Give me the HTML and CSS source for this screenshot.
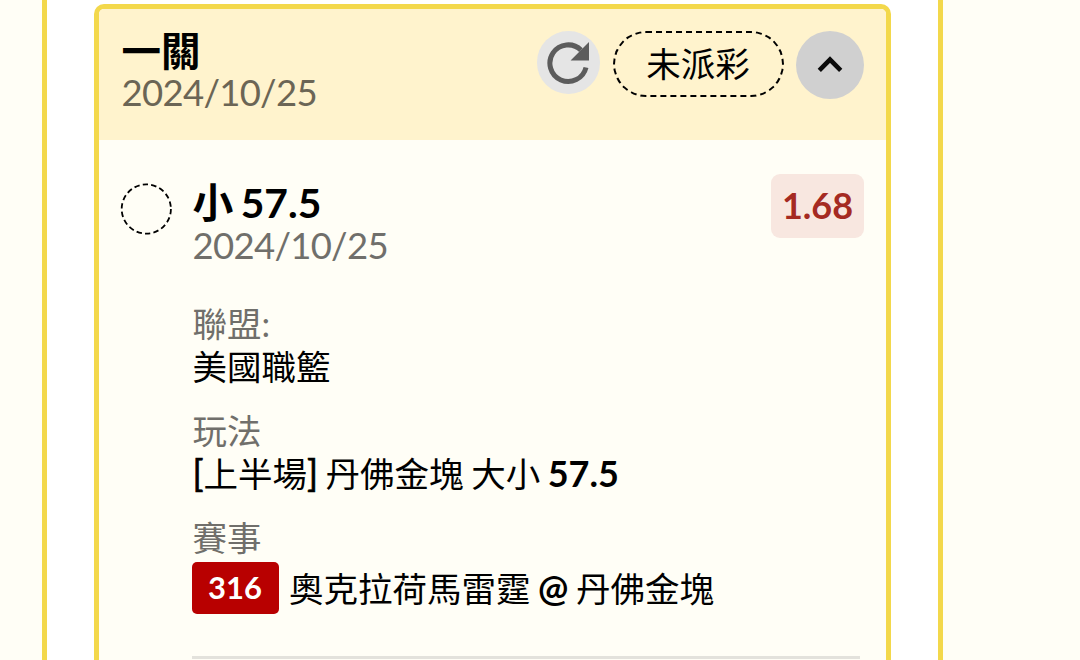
FILE: index.html
```html
<!DOCTYPE html>
<html lang="zh-Hant">
<head>
  <meta charset="UTF-8" />
  <meta name="viewport" content="width=device-width, initial-scale=1.0" />
  <title>一關</title>
  <link rel="stylesheet" href="styles.css">
</head>
<body>
  <div class="panel">
    <div class="card">
      <div class="card-header">
        <div class="heading">
          <div class="title">一關</div>
          <div class="date">2024/10/25</div>
        </div>
        <button class="refresh" aria-label="refresh">
          <svg width="44" height="44" viewBox="0 0 44 44">
            <path d="M35 9.1A18.3 18.3 0 1 0 40 26.5" fill="none" stroke="#5c5c5c" stroke-width="5" />
            <path d="M43 1.1v18.4H24.6z" fill="#5c5c5c" />
          </svg>
        </button>
        <div class="status">未派彩</div>
        <button class="toggle" aria-label="collapse">
          <svg width="26" height="18" viewBox="0 0 26 18">
            <path d="M2.3 14.3L13 3.6L23.7 14.3" fill="none" stroke="#0a0a0a" stroke-width="4.6" />
          </svg>
        </button>
      </div>
      <div class="bet">
        <svg class="mark" width="52" height="52" viewBox="0 0 52 52">
          <circle cx="26.3" cy="26" r="24.6" fill="none" stroke="#000" stroke-width="1.8" stroke-dasharray="5.4 3.18" />
        </svg>
        <div class="detail">
          <div class="bet-top">
            <div class="pick-box">
              <div class="pick">小 57.5</div>
              <div class="date">2024/10/25</div>
            </div>
            <div class="odds">1.68</div>
          </div>
          <div class="row">
            <div class="label">聯盟:</div>
            <div class="value">美國職籃</div>
          </div>
          <div class="row">
            <div class="label">玩法</div>
            <div class="value"><span class="bracket">[</span>上半場<span class="bracket">]</span> 丹佛金塊 大小 <b>57.5</b></div>
          </div>
          <div class="row">
            <div class="label">賽事</div>
            <div class="value match"><span class="code">316</span><span>奧克拉荷馬雷霆 <b>@</b> 丹佛金塊</span></div>
          </div>
          <div class="line"></div>
        </div>
      </div>
    </div>
  </div>
</body>
</html>
```

FILE: styles.css
```css
* {
  box-sizing: border-box;
}
body {
  margin: 0;
  height: 660px;
  overflow: hidden;
  background: #fffef6;
  color: #000;
  font-family: Lato, "Noto Sans CJK TC", sans-serif;
  font-size: 34.5px;
}
.panel {
  width: 901px;
  height: 660px;
  margin-left: 42px;
  padding: 4px 47px 0;
  background: #fff;
  border: solid #f3d84b;
  border-width: 0 5px;
}
.card {
  height: 656px;
  background: #fffef6;
  border: 5px solid #f3d84b;
  border-bottom: 0;
  border-radius: 10px 10px 0 0;
}
.card-header {
  display: flex;
  align-items: flex-start;
  height: 131px;
  padding: 22.4px 22px 0 22.5px;
  border-radius: 5px 5px 0 0;
  background: #fff3cd;
}
.heading {
  flex: 1;
  margin-top: -1px;
}
.title {
  height: 41px;
  font-size: 39.5px;
  font-weight: 700;
  line-height: 41px;
}
.date {
  height: 43px;
  font-size: 36.5px;
  line-height: 43px;
  letter-spacing: -0.7px;
  color: #6b6555;
}
button {
  display: flex;
  align-items: center;
  justify-content: center;
  padding: 0;
  border: 0;
  border-radius: 50%;
}
.refresh {
  width: 62.5px;
  height: 62.5px;
  background: #e5e5e5;
}
.status {
  width: 171px;
  height: 66px;
  margin: 0 12.5px 0 13px;
  border: 2px dashed #000;
  border-radius: 33px;
  line-height: 61px;
  text-align: center;
}
.toggle {
  width: 68px;
  height: 68px;
  background: #d0d0d0;
}
.bet {
  display: flex;
  padding: 34px 22px 0 21px;
}
.mark {
  flex: none;
  margin-top: 9px;
}
.detail {
  flex: 1;
  margin-left: 20.5px;
}
.bet-top {
  display: flex;
  justify-content: space-between;
  height: 128px;
}
.pick {
  height: 50px;
  padding-top: 6px;
  font-size: 40.8px;
  font-weight: 700;
  line-height: 46px;
  word-spacing: -2.5px;
}
.bet .date {
  color: #706f6b;
}
.odds {
  width: 93px;
  height: 64px;
  border-radius: 9px;
  background: #f8e7e0;
  color: #a52a22;
  font-size: 36px;
  font-weight: 700;
  line-height: 63px;
  text-align: center;
}
.row {
  height: 107px;
}
.label {
  height: 43px;
  line-height: 43px;
  color: #706f6b;
}
.value {
  height: 43px;
  line-height: 43px;
  white-space: nowrap;
  word-spacing: -1.3px;
}
.value b {
  font-weight: 700;
  font-size: 36px;
}
.bracket {
  font-size: 36px;
  -webkit-text-stroke: 0.7px #000;
}
.match {
  display: flex;
  align-items: center;
  height: 52px;
  margin: 3px 0 0 -1px;
}
.code {
  width: 87px;
  height: 52px;
  margin-right: 10.5px;
  border-radius: 5px;
  background: #b80000;
  color: #fff;
  font-size: 31px;
  font-weight: 700;
  line-height: 51px;
  text-align: center;
}
.line {
  width: 668px;
  height: 3px;
  margin: 33px 0 0 -1px;
  background: #e3e2dc;
}
```
